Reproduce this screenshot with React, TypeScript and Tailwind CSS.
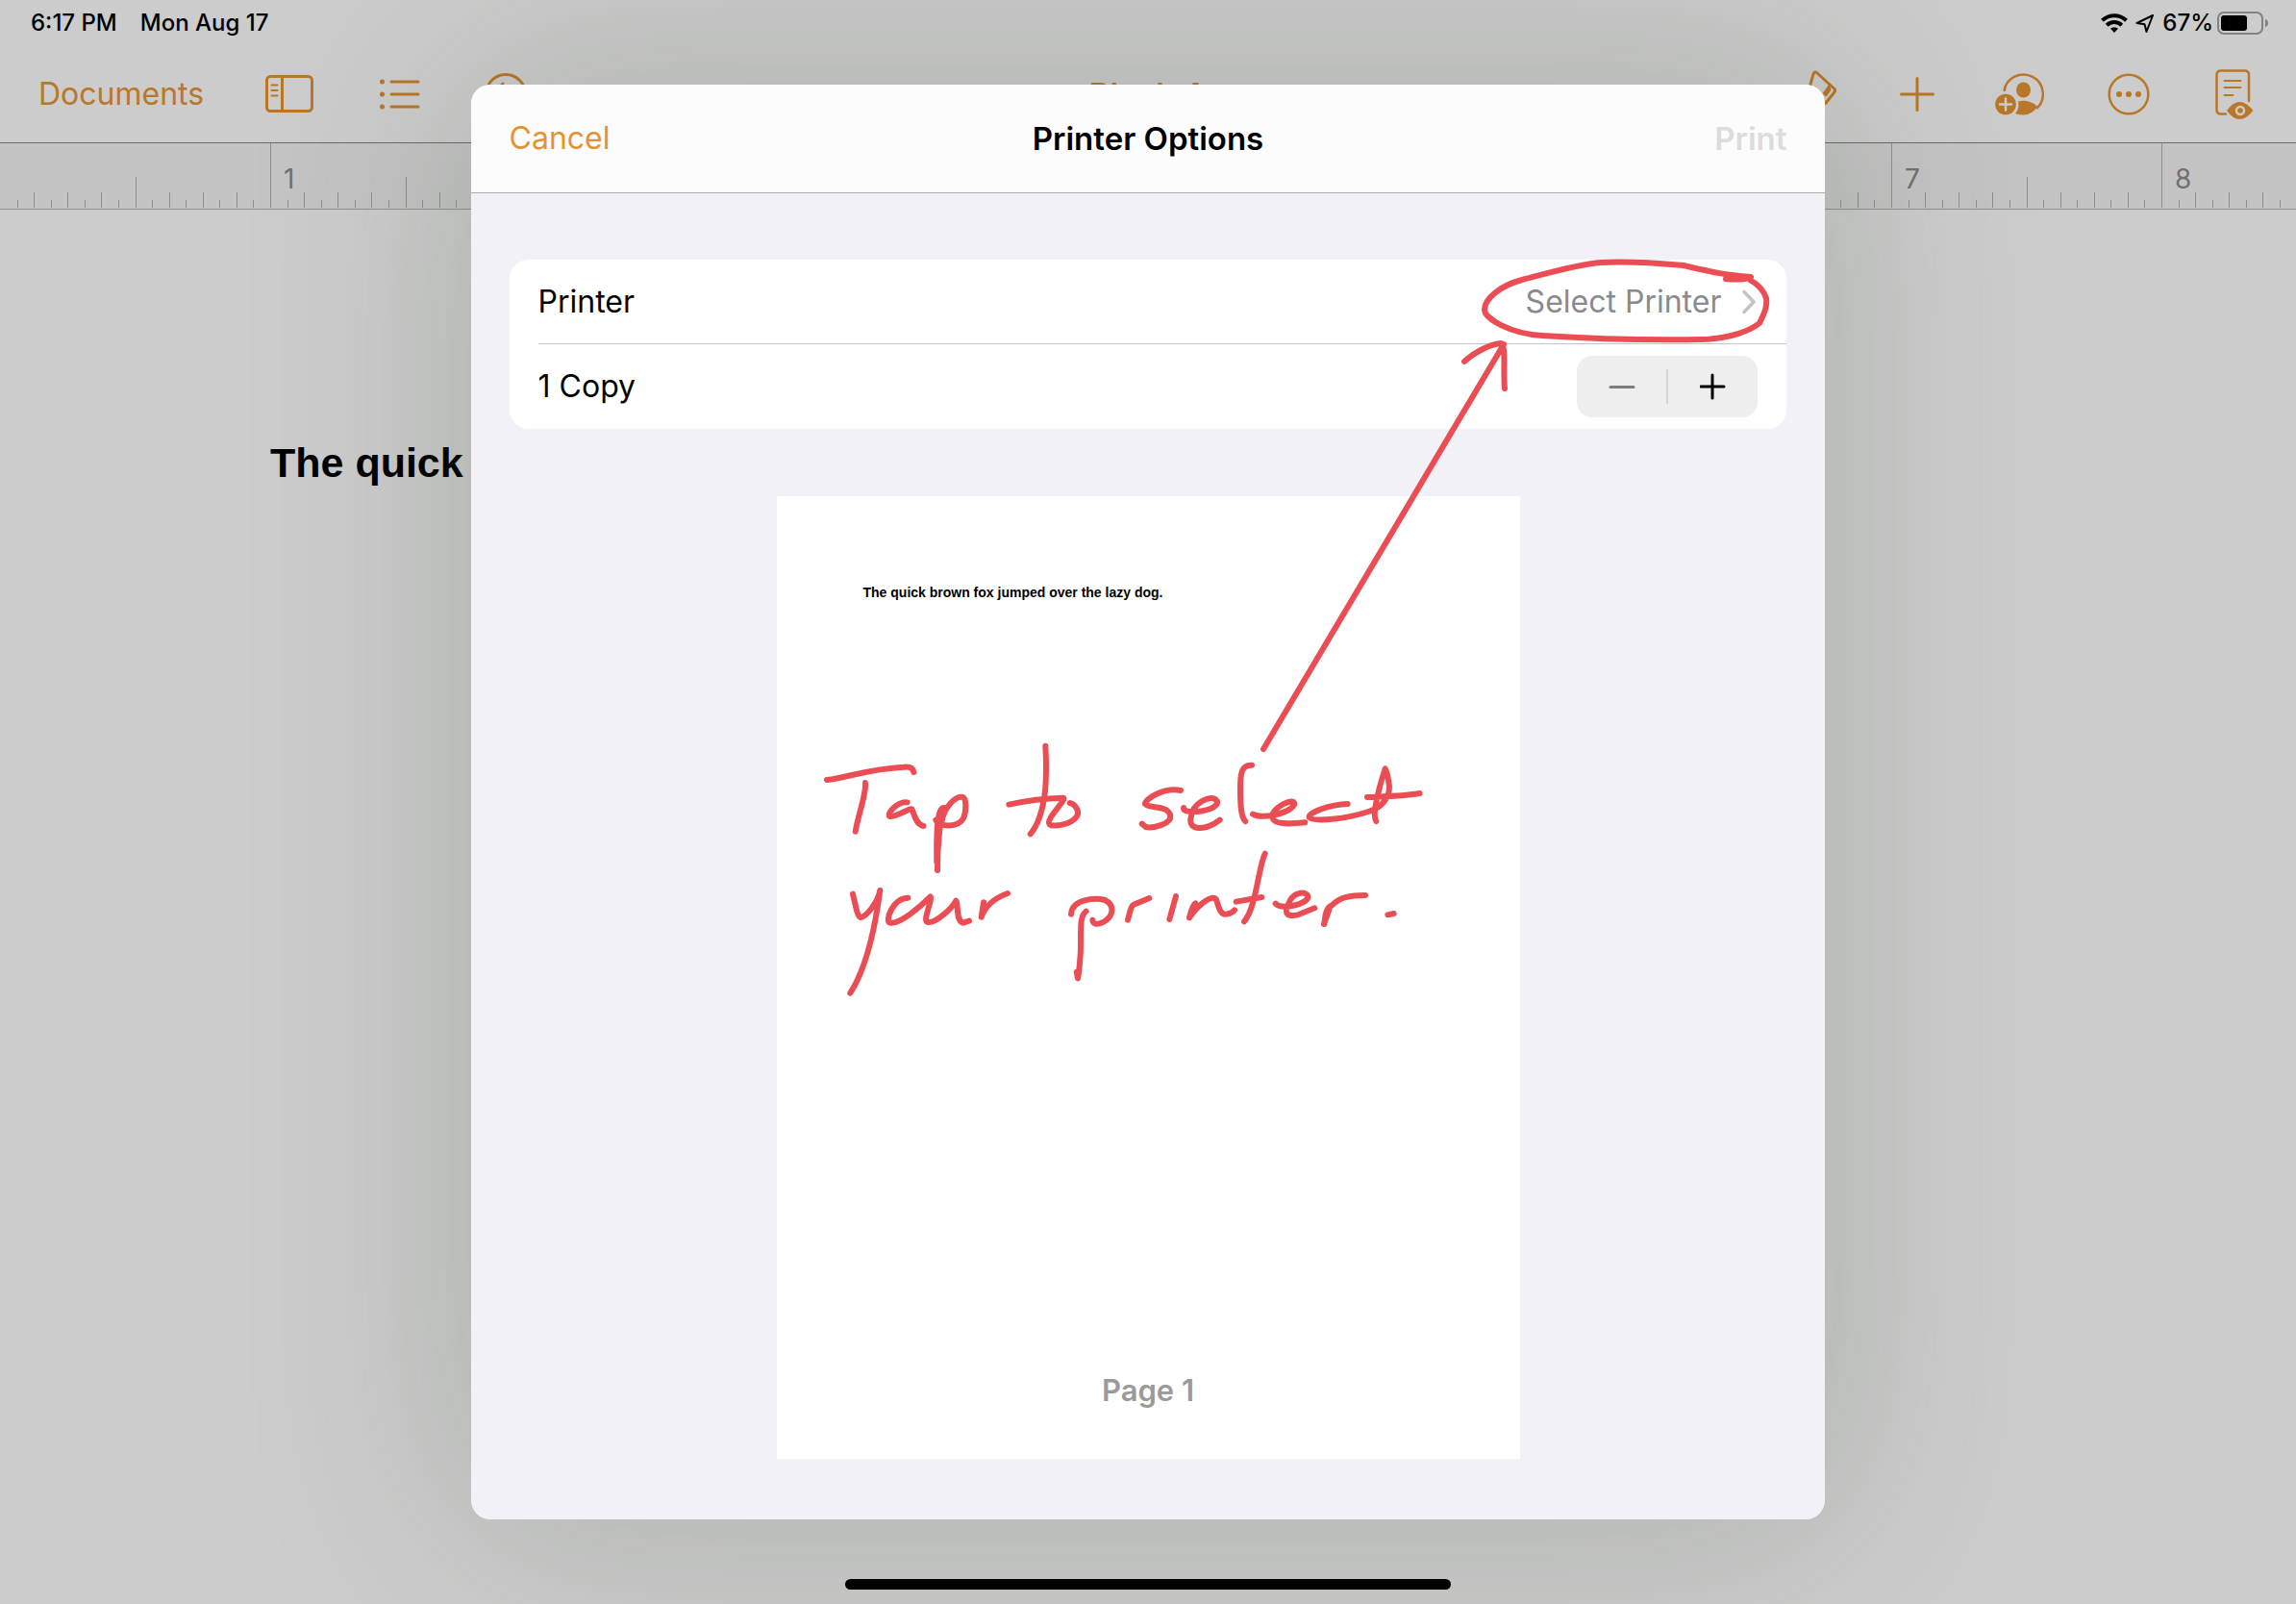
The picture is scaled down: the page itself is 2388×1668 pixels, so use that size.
const SF = "font-['Inter','Liberation_Sans',sans-serif]";

function StatusBar() {
  return (
    <div className="flex h-12 items-center justify-between pl-8 pr-7 text-2xl font-medium text-black">
      <div className="flex gap-6">
        <span>6:17 PM</span>
        <span>Mon Aug 17</span>
      </div>
      <div className="flex items-center gap-2">
        <svg viewBox="0 0 28 20" className="h-5 w-7" fill="none" stroke="#000" strokeWidth="4" aria-label="Wi-Fi">
          <path d="M1.5 7.2a18 18 0 0 1 25 0" />
          <path d="M6.2 12.2a11.2 11.2 0 0 1 15.6 0" />
          <path d="M14 20l-4-4.2a5.8 5.8 0 0 1 8 0z" fill="#000" stroke="none" />
        </svg>
        <svg viewBox="0 0 20 20" className="size-5" fill="none" stroke="#000" strokeWidth="2" strokeLinejoin="round" aria-label="Location">
          <path d="M18 2L1.5 10l8 1.300 2 7.700z" />
        </svg>
        <span>67%</span>
        <svg viewBox="0 0 54 24" className="-ml-1 h-6 w-[54px]" aria-label="Battery">
          <rect x="1" y="1" width="46" height="22" rx="6" fill="none" stroke="#828282" strokeWidth="2" />
          <rect x="4" y="4" width="27" height="16" rx="3" fill="#000" />
          <path d="M50 8c2 .6 3 2 3 4s-1 3.400-3 4z" fill="#828282" />
        </svg>
      </div>
    </div>
  );
}

function Toolbar() {
  return (
    <div className="flex h-[101px] items-start border-b border-[#6b6b6b] pl-10 pr-11 text-[#b97728]">
      <div className="flex h-[99px] flex-1 items-center">
        <button className="text-[32px] leading-10">Documents</button>
        <button aria-label="View options" className="ml-16">
          <svg viewBox="0 0 50 40" className="h-10 w-[50px]" fill="none" stroke="currentColor" strokeWidth="3">
            <rect x="1.500" y="1.500" width="47" height="36" rx="4" />
            <path d="M17.500 2v35" />
            <path d="M6.500 10.500h6M6.500 16h6M6.500 21.500h6" strokeWidth="2" strokeLinecap="round" />
          </svg>
        </button>
        <button aria-label="Table of contents" className="ml-[68px]">
          <svg viewBox="0 0 44 40" className="h-10 w-11" fill="none" stroke="currentColor" strokeWidth="3" strokeLinecap="round">
            <path d="M13 7h28M13 20h28M13 33h28" />
            <path d="M3.500 7h.01M3.500 20h.01M3.500 33h.01" strokeWidth="5" />
          </svg>
        </button>
        <button aria-label="Undo" className="ml-[66px]">
          <svg viewBox="0 0 44 44" className="size-11" fill="none" stroke="currentColor" strokeWidth="3" strokeLinecap="round">
            <circle cx="22" cy="22" r="20.500" />
            <path d="M19 11l-7 8 7 7M13 19h13a6 6 0 0 1 0 12h-4" />
          </svg>
        </button>
      </div>
      <div className="flex h-[99px] items-center">
        <h1 className="text-[33px] font-semibold leading-10">Blank 4</h1>
      </div>
      <div className="flex h-[99px] flex-1 items-center justify-end">
        <button aria-label="Format" className="mr-[66px]">
          <svg viewBox="0 0 48 50" className="h-[50px] w-12" fill="none" stroke="currentColor" strokeWidth="3" strokeLinejoin="round">
            <path d="M20 18L24 4q1-3 3.500-1.500L45.500 19q2 1.800.3 4L37 34" />
            <path d="M41.500 14.500L35 24l2 2.500 5-7" fill="currentColor" strokeWidth="2" />
            <path d="M37 34L18 46Q10 50 4 42L20 18z" />
          </svg>
        </button>
        <button aria-label="Insert" className="mr-[62px]">
          <svg viewBox="0 0 36 36" className="size-9" fill="none" stroke="currentColor" strokeWidth="3" strokeLinecap="round">
            <path d="M18 1.500v33M1.500 18h33" />
          </svg>
        </button>
        <button aria-label="Collaborate" className="mr-[66px]">
          <svg viewBox="0 0 52 50" className="h-[50px] w-[52px]">
            <path d="M10.400 22A20.300 20.300 0 1 1 44 40" fill="none" stroke="currentColor" strokeWidth="2.500" />
            <ellipse cx="30.500" cy="20.500" rx="7.500" ry="8" fill="currentColor" />
            <path d="M25 32.500Q30.500 31 36 32.500T45 38Q39 46.500 30.500 46.500 26 46.500 22 45 25.500 41 25.500 36z" fill="currentColor" />
            <circle cx="12" cy="35.500" r="10.800" fill="currentColor" />
            <path d="M12 29.500v12M6 35.500h12" stroke="#cbcbcb" strokeWidth="2.500" strokeLinecap="round" />
          </svg>
        </button>
        <button aria-label="More" className="mr-[68px]">
          <svg viewBox="0 0 44 44" className="size-11" fill="currentColor">
            <circle cx="22" cy="22" r="20.300" fill="none" stroke="currentColor" strokeWidth="2.500" />
            <circle cx="12" cy="22" r="3" />
            <circle cx="22" cy="22" r="3" />
            <circle cx="32" cy="22" r="3" />
          </svg>
        </button>
        <button aria-label="Reading view">
          <svg viewBox="0 0 40 52" className="h-[52px] w-10" fill="none" stroke="currentColor" strokeWidth="2.500" strokeLinecap="round">
            <path d="M35 33V6q0-4.500-4.500-4.500H6Q1.500 1.500 1.500 6v36q0 4.500 4.500 4.500h5" />
            <path d="M9.500 12h17M9.500 19h17M9.500 27h9" strokeWidth="2" />
            <path d="M12 43q13-18 27.500 0-14.500 18-27.500 0z" fill="currentColor" stroke="none" />
            <circle cx="26" cy="43" r="4" stroke="#cbcbcb" />
          </svg>
        </button>
      </div>
    </div>
  );
}

const INCHES = [0, 1, 2, 3, 4, 5, 6, 7, 8];
const SIXTEENTHS = Array.from({ length: 16 }, (_, i) => i);

function tickHeight(i: number, inch: number) {
  if (i === 0) return inch === 0 ? "h-0" : "h-[67px]";
  if (i === 8) return "h-8";
  return i % 2 === 0 ? "h-4" : "h-2";
}

function Ruler() {
  return (
    <div className="flex h-[69px] overflow-hidden border-b border-[#929292] bg-[#c4c4c4]">
      {INCHES.map((inch) => (
        <div key={inch} className="relative flex w-[281px] shrink-0 items-end pb-px">
          {SIXTEENTHS.map((i) => (
            <div key={i} className={`flex-1 border-l border-[#8e8e8e] ${tickHeight(i, inch)}`} />
          ))}
          {inch > 0 && <span className="absolute left-3.5 top-[19px] text-[28px] leading-9 text-[#717171]">{inch}</span>}
        </div>
      ))}
    </div>
  );
}

function PrinterDialog() {
  return (
    <section
      role="dialog"
      aria-label="Printer Options"
      className="relative flex h-[1492px] w-[59%] flex-col overflow-hidden rounded-[20px] bg-[#f2f1f7]"
    >
      <header className="grid h-[113px] shrink-0 grid-cols-3 items-center border-b border-[#acacae] bg-[#fcfcfd] px-10 text-[32px] leading-10">
        <button className="justify-self-start text-[#e3932f]">Cancel</button>
        <h2 className="text-center text-[33px] font-semibold text-black">Printer Options</h2>
        <button disabled className="justify-self-end text-[33px] font-semibold text-[#dcdcdd]">
          Print
        </button>
      </header>
      <div className="flex flex-1 flex-col items-center px-10 pt-[69px]">
        <div className="w-full rounded-[20px] bg-white pl-[30px] text-[32px] leading-10 text-black">
          <div className="flex h-[88px] items-center justify-between border-b border-[#c6c6c8] pr-8">
            <span>Printer</span>
            <button className="flex items-center gap-[22px] text-[#8a8a8e]">
              Select Printer
              <svg viewBox="0 0 14 26" className="h-[26px] w-3.5" fill="none" stroke="#c4c4c7" strokeWidth="3.500" strokeLinecap="round" strokeLinejoin="round">
                <path d="M2 2.500L12 13 2 23.500" />
              </svg>
            </button>
          </div>
          <div className="flex h-[88px] items-center justify-between pr-[30px]">
            <span>1 Copy</span>
            <div className="flex h-16 w-[188px] items-center rounded-2xl bg-[#eeeeee]">
              <button disabled aria-label="Fewer copies" className="flex flex-1 justify-center">
                <svg viewBox="0 0 28 28" className="size-7" stroke="#7d7d7d" strokeWidth="3" strokeLinecap="round">
                  <path d="M2 14.500h24" />
                </svg>
              </button>
              <div className="h-9 w-0.5 bg-[#d5d5d6]" />
              <button aria-label="More copies" className="flex flex-1 justify-center">
                <svg viewBox="0 0 28 28" className="size-7" stroke="#000" strokeWidth="3" strokeLinecap="round">
                  <path d="M1 14h24M13 2v24" />
                </svg>
              </button>
            </div>
          </div>
        </div>
        <div className="mt-[70px] flex h-[1001px] w-[773px] flex-col items-center justify-between bg-white pb-[51px] pt-[90px]">
          <p className="w-full pl-[90px] font-['Liberation_Sans',sans-serif] text-sm font-bold text-black">
            The quick brown fox jumped over the lazy dog.
          </p>
          <p className="text-[31px] font-semibold leading-10 text-[#9a9a9a]">Page 1</p>
        </div>
      </div>
    </section>
  );
}

/* Freehand ink drawn over the dialog, in window units. */
function Ink() {
  return (
    <svg
      viewBox="840 260 1020 790"
      className="pointer-events-none absolute left-[350px] top-[172px] h-[790px] w-[1020px]"
      fill="none"
      stroke="#ea4e54"
      strokeWidth="6"
      strokeLinecap="round"
      strokeLinejoin="round"
      role="img"
      aria-label="Tap to select your printer."
    >
      <path d="M1795 290C1806 291 1815 291 1821 288C1795 286 1780 283 1751 276C1705 272 1685 272 1665 273C1640 275 1610 284 1583 291C1560 297 1544 311 1544 322C1544 331 1570 347 1604 349C1650 352 1700 354 1770 353C1800 352 1820 344 1830 336C1836 324 1838 318 1837 310C1834 301 1829 296 1820 291" />
      <path d="M1314 779L1564 358M1523 376C1530 369 1548 358 1561 357C1567 360 1563 385 1565 404" />
      <g transform="translate(840 740) scale(.33333)" strokeWidth="18">
        <path d="M60 213C120 207 190 178 300 173Q328 170 331 189M180 222C184 255 158 320 149 374" />
        <path d="M311 283C282 278 245 318 256 327C270 332 320 300 325 304C332 315 335 350 361 357" />
        <path d="M405 495C404 430 412 345 425 300M403 470C402 400 402 310 421 301M400 338C410 360 470 364 486 333C496 310 495 270 485 267C460 262 425 300 418 345" />
        <path d="M742 107C745 160 744 215 741 248C735 300 722 350 695 382M628 290C690 276 750 270 796 269C815 270 740 335 755 352C765 360 820 355 840 327C850 310 833 287 818 285" />
        <path d="M141 569C150 605 155 640 165 642C180 643 220 595 226 557C215 640 190 790 133 878" />
        <path d="M313 581C265 582 240 655 257 659C290 665 360 600 383 577C390 585 360 650 372 656C395 665 450 615 463 590C472 600 460 650 485 659L504 653" />
        <path d="M549 595L542 641Q560 590 624 567" />
        <path d="M822 632C825 580 905 582 928 588C960 605 955 640 920 658C905 665 890 665 889 650M869 623C845 640 855 690 851 760C848 790 848 810 843 832L839 812" />
      </g>
      <g transform="translate(1160 740) scale(.33333)" strokeWidth="18">
        <path d="M204 246C150 235 90 275 93 288C105 304 165 290 172 325C175 350 120 365 95 360L83 350" />
        <path d="M213 300C210 325 330 310 317 278C300 255 240 285 236 330C225 375 285 370 326 338" />
        <path d="M426 167C395 165 390 190 390 240C390 290 392 330 406 342" />
        <path d="M429 320C455 335 545 320 559 288C560 265 485 300 490 330C495 355 550 350 592 346" />
        <path d="M725 288C670 290 600 315 605 330C620 345 720 335 790 312C830 300 855 270 855 235C853 215 850 195 842 178C830 215 798 320 814 342M786 267C850 265 900 263 950 255" />
        <path d="M39 650C45 625 50 605 57 602L106 582M189 576L169 648M231 643C238 615 245 600 250 598M231 643C265 595 305 570 315 586C325 620 330 635 348 632Q365 628 372 619" />
        <path d="M467 443C445 490 440 610 402 655M377 593L457 579" />
        <path d="M500 599C520 620 600 600 601 578C600 560 560 560 545 590C520 635 540 640 570 634L622 613" />
        <path d="M652 663C655 630 660 610 675 605C700 580 730 573 780 573M651 663L667 618M850 634L869 630" />
      </g>
    </svg>
  );
}

export default function App() {
  return (
    <div className={`relative min-h-screen overflow-hidden bg-[#cccccc] ${SF}`}>
      <StatusBar />
      <Toolbar />
      <Ruler />
      <main className="px-[281px] pt-[238px] font-['Liberation_Sans',sans-serif] text-[43px] font-bold leading-[50px] text-black">
        <p>The quick brown fox jumped over the lazy dog.</p>
      </main>
      <div className="absolute inset-0 flex flex-col items-center justify-between pb-[15px] pt-[88px]">
        <div className="relative flex w-full justify-center">
          <div className="absolute inset-y-0 w-[59%] rounded-[20px] shadow-[0_0_230px_rgba(38,60,34,0.21)]" />
          <PrinterDialog />
          <div className="absolute inset-y-0 left-[490px]">
            <Ink />
          </div>
        </div>
        <div className="h-[11px] w-[630px] rounded-full bg-black" />
      </div>
    </div>
  );
}
